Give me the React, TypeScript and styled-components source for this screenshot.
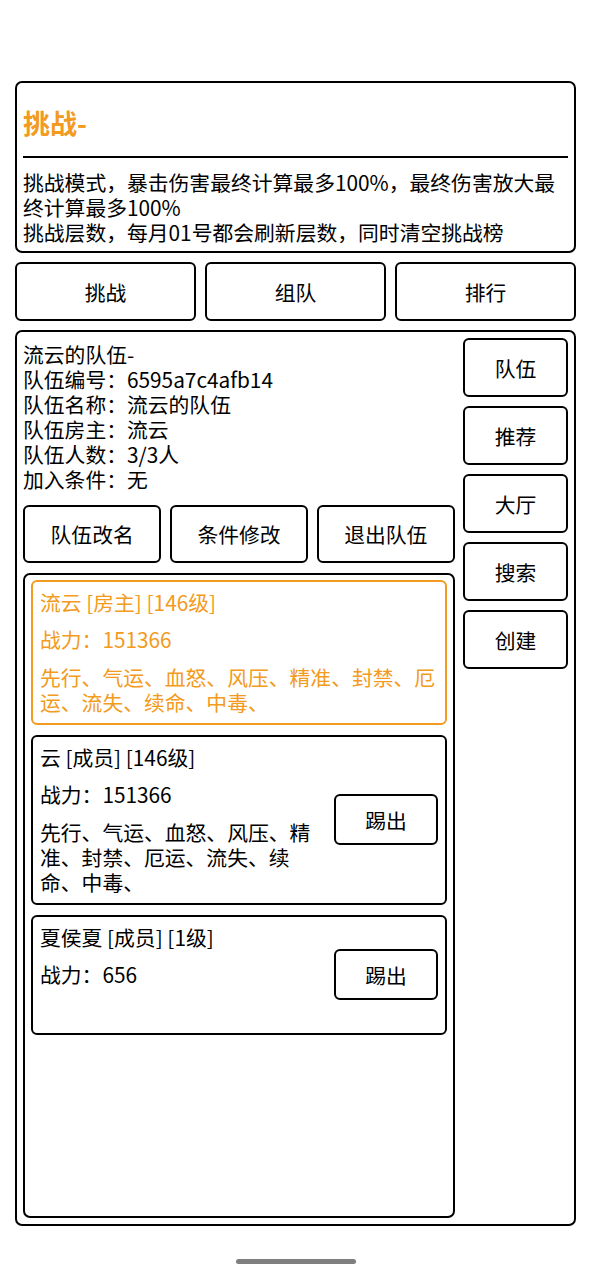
import React from "react";
import styled, { createGlobalStyle } from "styled-components";

const ORANGE = "#f39a20";
const FONT = `"Noto Sans CJK SC", "Noto Sans", sans-serif`;

const Global = createGlobalStyle`
  html, body { margin: 0; padding: 0; background: #fff; }
  body { font-family: ${FONT}; color: #000; }
  * { box-sizing: border-box; }
`;

const Page = styled.div`
  height: 1280px;
  display: flex;
  flex-direction: column;
  padding: 81px 15px 0;
  font-size: 20.8px;
  line-height: 25px;
`;

const Header = styled.section`
  border: 2px solid #000;
  border-radius: 7px;
  padding: 0 6px 6px;
`;

const Title = styled.div`
  padding-top: 24px;
  font-size: 27px;
  line-height: 32px;
  font-weight: 700;
  color: ${ORANGE};
`;

const Divider = styled.div`
  margin-top: 17px;
  height: 2px;
  background: #000;
`;

const Desc = styled.div`
  margin-top: 12px;
`;

const Tabs = styled.div`
  margin-top: 9px;
  display: grid;
  grid-template-columns: repeat(3, 1fr);
  gap: 9px;
`;

const Button = styled.button<{ $h: number }>`
  height: ${(p) => p.$h}px;
  border: 2px solid #000;
  border-radius: 6px;
  background: #fff;
  color: #000;
  font-family: ${FONT};
  font-size: 20.8px;
  padding: 0;
  display: flex;
  align-items: center;
  justify-content: center;
`;

const Panel = styled.section`
  margin-top: 9px;
  flex: 1;
  min-height: 0;
  border: 2px solid #000;
  border-radius: 7px;
  padding: 6px 6px 6px;
  display: flex;
  gap: 8px;
`;

const LeftCol = styled.div`
  flex: 1;
  display: flex;
  flex-direction: column;
  min-width: 0;
`;

const RightCol = styled.div`
  width: 105px;
  display: flex;
  flex-direction: column;
  gap: 9px;
`;

const Info = styled.div`
  margin-top: 4px;
`;

const Actions = styled.div`
  margin-top: 12.5px;
  display: grid;
  grid-template-columns: repeat(3, 1fr);
  gap: 8.5px;
`;

const MemberBox = styled.div`
  margin-top: 10px;
  flex: 1;
  border: 2px solid #000;
  border-radius: 7px;
  padding: 5px 6px;
  display: flex;
  flex-direction: column;
  gap: 10px;
`;

const Card = styled.div<{ $owner?: boolean }>`
  border: 2px solid ${(p) => (p.$owner ? ORANGE : "#000")};
  color: ${(p) => (p.$owner ? ORANGE : "#000")};
  border-radius: 6px;
  padding: 8px 7px;
  display: flex;
  align-items: center;
  gap: 20px;
`;

const CardText = styled.div`
  flex: 1;
  min-width: 0;
  display: flex;
  flex-direction: column;
  gap: 12.5px;
`;

const Line = styled.div`
  min-height: 25px;
`;

const KickButton = styled(Button)`
  width: 104px;
  flex: none;
`;

const BottomBar = styled.div`
  height: 54px;
  display: flex;
  justify-content: center;
  padding-top: 33px;
`;

const HomeIndicator = styled.div`
  width: 120px;
  height: 5px;
  border-radius: 3px;
  background: #7f7f7f;
`;

type Member = {
  name: string;
  power: string;
  skills: string;
  owner?: boolean;
};

const members: Member[] = [
  {
    name: "流云 [房主] [146级]",
    power: "战力：151366",
    skills: "先行、气运、血怒、风压、精准、封禁、厄运、流失、续命、中毒、",
    owner: true,
  },
  {
    name: "云 [成员] [146级]",
    power: "战力：151366",
    skills: "先行、气运、血怒、风压、精准、封禁、厄运、流失、续命、中毒、",
  },
  { name: "夏侯夏 [成员] [1级]", power: "战力：656", skills: "" },
];

export default function App() {
  return (
    <>
      <Global />
      <Page>
        <Header>
          <Title>挑战-</Title>
          <Divider />
          <Desc>
            挑战模式，暴击伤害最终计算最多100%，最终伤害放大最终计算最多100%
            <br />
            挑战层数，每月01号都会刷新层数，同时清空挑战榜
          </Desc>
        </Header>
        <Tabs>
          <Button $h={59}>挑战</Button>
          <Button $h={59}>组队</Button>
          <Button $h={59}>排行</Button>
        </Tabs>
        <Panel>
          <LeftCol>
            <Info>
              <div>流云的队伍-</div>
              <div>队伍编号：6595a7c4afb14</div>
              <div>队伍名称：流云的队伍</div>
              <div>队伍房主：流云</div>
              <div>队伍人数：3/3人</div>
              <div>加入条件：无</div>
            </Info>
            <Actions>
              <Button $h={58}>队伍改名</Button>
              <Button $h={58}>条件修改</Button>
              <Button $h={58}>退出队伍</Button>
            </Actions>
            <MemberBox>
              {members.map((m) => (
                <Card key={m.name} $owner={m.owner}>
                  <CardText>
                    <Line>{m.name}</Line>
                    <Line>{m.power}</Line>
                    <Line>{m.skills}</Line>
                  </CardText>
                  {!m.owner && <KickButton $h={51}>踢出</KickButton>}
                </Card>
              ))}
            </MemberBox>
          </LeftCol>
          <RightCol>
            {["队伍", "推荐", "大厅", "搜索", "创建"].map((t) => (
              <Button key={t} $h={59}>
                {t}
              </Button>
            ))}
          </RightCol>
        </Panel>
        <BottomBar>
          <HomeIndicator />
        </BottomBar>
      </Page>
    </>
  );
}
